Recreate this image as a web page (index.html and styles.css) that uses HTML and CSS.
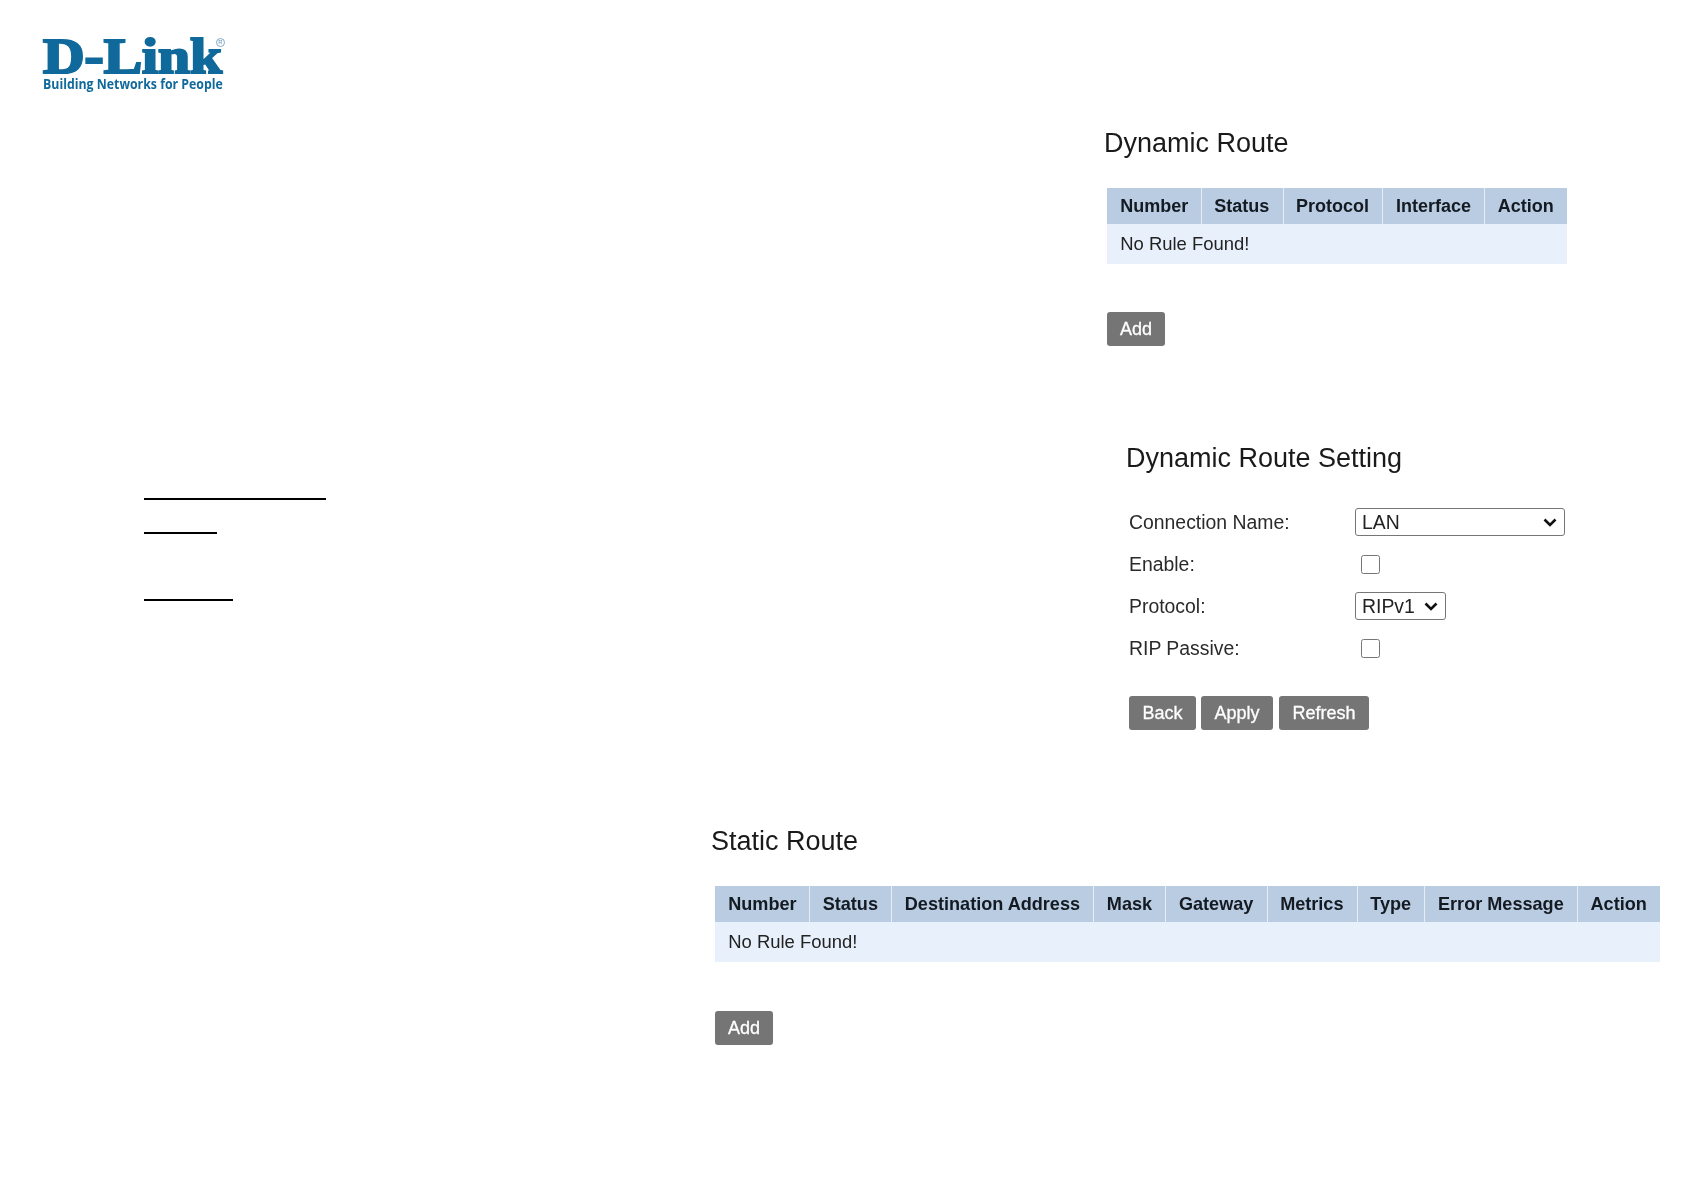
FILE: index.html
```html
<!DOCTYPE html>
<html lang="en">
<head>
<meta charset="utf-8">
<title>D-Link Routing</title>
<link rel="stylesheet" href="styles.css">
</head>
<body>
<header class="brand">
  <div class="logo">
    <div class="logo-line"><span class="logo-word">D-Link</span><span class="logo-reg">R</span></div>
    <div class="logo-line-tag"><span class="logo-tag">Building Networks for People</span></div>
  </div>
</header>

<section class="panel panel-dynamic">
  <h2 class="title title-dyn">Dynamic Route</h2>
  <table class="rules">
    <thead>
      <tr><th>Number</th><th>Status</th><th>Protocol</th><th>Interface</th><th>Action</th></tr>
    </thead>
    <tbody>
      <tr><td colspan="5">No Rule Found!</td></tr>
    </tbody>
  </table>
  <button class="btn btn-add" type="button">Add</button>
</section>

<div class="middle">
  <div class="blanks">
    <span class="blank blank-a"></span>
    <span class="blank blank-b"></span>
    <span class="blank blank-c"></span>
  </div>
  <section class="setting">
    <h2 class="title title-set">Dynamic Route Setting</h2>
    <div class="form">
      <label class="label">Connection Name:</label>
      <select class="select select-wide"><option>LAN</option></select>
      <label class="label">Enable:</label>
      <input class="check" type="checkbox">
      <label class="label">Protocol:</label>
      <select class="select select-narrow"><option>RIPv1</option></select>
      <label class="label">RIP Passive:</label>
      <input class="check" type="checkbox">
    </div>
    <div class="actions">
      <button class="btn btn-back" type="button">Back</button>
      <button class="btn btn-apply" type="button">Apply</button>
      <button class="btn btn-refresh" type="button">Refresh</button>
    </div>
  </section>
</div>

<section class="panel panel-static">
  <h2 class="title title-static">Static Route</h2>
  <table class="rules rules-static">
    <thead>
      <tr><th>Number</th><th>Status</th><th>Destination Address</th><th>Mask</th><th>Gateway</th><th>Metrics</th><th>Type</th><th>Error Message</th><th>Action</th></tr>
    </thead>
    <tbody>
      <tr><td colspan="9">No Rule Found!</td></tr>
    </tbody>
  </table>
  <button class="btn btn-add btn-add-static" type="button">Add</button>
</section>
</body>
</html>
```
FILE: styles.css
```css
html, body {
  margin: 0;
  padding: 0;
  background: #fff;
}
body {
  width: 1684px;
  height: 1191px;
  overflow: hidden;
  font-family: "Liberation Sans", Arial, sans-serif;
  color: #1c1c1c;
}
.brand {
  height: 127px;
  padding: 38px 0 0 43px;
  box-sizing: border-box;
}
.logo {
  width: 190px;
  filter: blur(.4px);
}
.logo-line {
  position: relative;
  height: 36px;
  line-height: 36px;
}
.logo-word {
  display: inline-block;
  font-family: "Liberation Serif", serif;
  font-weight: 700;
  font-size: 50px;
  color: #10699b;
  -webkit-text-stroke: 2.2px #10699b;
  transform: scaleX(1.15);
  transform-origin: 0 50%;
}
.logo-reg {
  position: absolute;
  top: 0;
  left: 173px;
  width: 7px;
  height: 7px;
  border: 1px solid #7fa9c4;
  border-radius: 50%;
  font-size: 6px;
  line-height: 7px;
  text-align: center;
  color: #5f93b5;
}
.logo-line-tag {
  height: 16px;
  margin-top: 2px;
  line-height: 16px;
  white-space: nowrap;
}
.logo-tag {
  display: inline-block;
  font-family: "Open Sans", sans-serif;
  font-weight: 700;
  font-size: 14.5px;
  color: #10699b;
  transform: scaleX(.85);
  transform-origin: 0 50%;
}
.panel, .setting {
  filter: blur(.35px);
}
.panel-dynamic {
  margin-left: 1107px;
  width: 470px;
}
.panel-static {
  margin-top: 96px;
  margin-left: 715px;
  width: 960px;
}
.title {
  margin: 0;
  font-size: 27px;
  font-weight: 400;
  color: #1a1a1a;
}
.title-dyn {
  margin-left: -3px;
  line-height: 32px;
}
.title-static {
  margin-left: -4px;
  line-height: 30px;
}
.title-set {
  margin-left: -3px;
  line-height: 34px;
}
.rules {
  margin-top: 29px;
  border-collapse: collapse;
  font-size: 18px;
}
.rules-static {
  margin-top: 30px;
  font-size: 18.1px;
}
.rules th {
  height: 36px;
  padding: 0 13.3px 0 12.5px;
  background: #b9cce2;
  border-right: 1px solid #e6edf4;
  font-weight: 700;
  text-align: left;
  white-space: nowrap;
  color: #141a22;
}
.rules th:first-child {
  padding: 0 12.6px 0 13.2px;
}
.rules th:last-child { border-right: 0; }
.rules td {
  height: 40px;
  padding: 0 13.2px;
  background: #e8f1fb;
  font-size: 18.45px;
  color: #222;
}
.btn {
  display: block;
  box-sizing: border-box;
  height: 34px;
  padding: 0;
  border: 0;
  border-radius: 3px;
  background: #757575;
  color: #fff;
  font-family: "Liberation Sans", Arial, sans-serif;
  font-size: 18px;
  text-align: center;
  -webkit-text-stroke: .3px #fff;
}
.btn-add {
  width: 58px;
  margin-top: 48px;
}
.btn-add-static { margin-top: 49px; }
.btn-back { width: 67px; }
.btn-apply {
  width: 72px;
  margin-right: 1px;
}
.btn-refresh { width: 90px; }
.middle {
  display: flex;
  margin-top: 95px;
  padding-left: 144px;
}
.blanks {
  flex: 0 0 985px;
  display: flex;
  flex-direction: column;
  padding-top: 57px;
}
.blank {
  display: block;
  height: 2px;
  background: #000;
}
.blank-a { width: 182px; }
.blank-b { width: 73px; margin-top: 32px; }
.blank-c { width: 89px; margin-top: 65px; }
.setting {
  width: 440px;
}
.form {
  display: grid;
  grid-template-columns: 226px 1fr;
  grid-auto-rows: 28px;
  row-gap: 14px;
  align-items: center;
  justify-items: start;
  margin-top: 33px;
}
.label {
  font-size: 19.4px;
  color: #2a2a2a;
}
.select {
  appearance: none;
  box-sizing: border-box;
  height: 28px;
  padding: 0 0 0 6px;
  font-family: "Liberation Sans", Arial, sans-serif;
  font-size: 19.4px;
  color: #222;
  background-color: #fff;
  background-image: url("data:image/svg+xml,%3Csvg xmlns='http://www.w3.org/2000/svg' width='14' height='9' viewBox='0 0 14 9'%3E%3Cpath d='M1.5 1.5 7 7l5.5-5.5' fill='none' stroke='%23111' stroke-width='2.6'/%3E%3C/svg%3E");
  background-repeat: no-repeat;
  background-position: right 7px center;
  border: 1px solid #767676;
  border-radius: 3px;
}
.select-wide { width: 210px; }
.select-narrow { width: 91px; }
.check {
  width: 19px;
  height: 19px;
  margin: 0 0 0 6px;
}
.actions {
  display: flex;
  gap: 5px;
  margin-top: 34px;
}
```
